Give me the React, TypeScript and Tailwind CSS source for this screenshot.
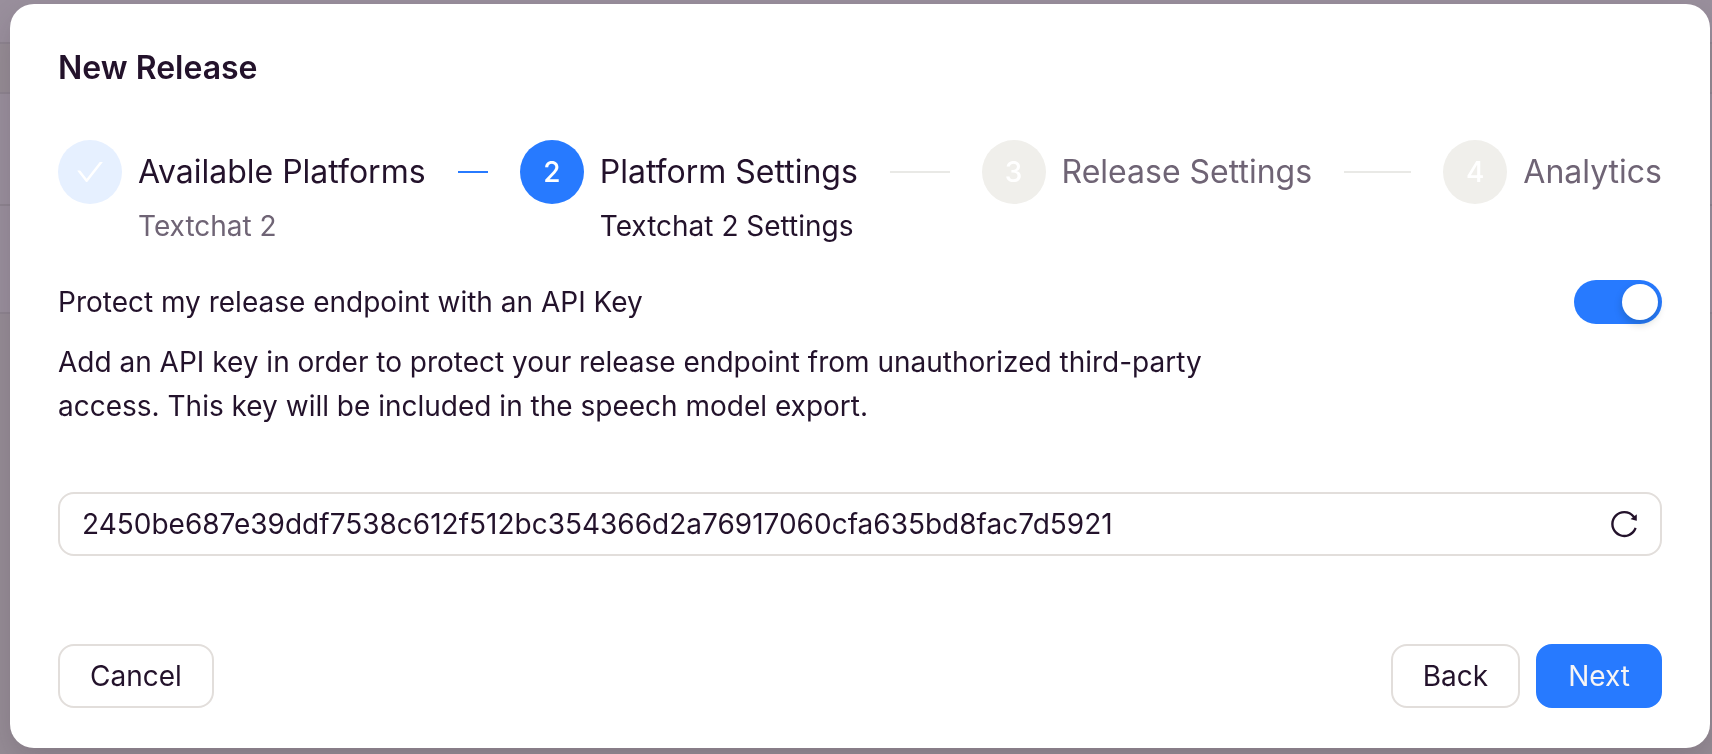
import { useState } from "react";
import { AiOutlineCheck, AiOutlineReload } from "react-icons/ai";
import clsx from "clsx";

type StepStatus = "done" | "active" | "waiting";

interface Step {
  title: string;
  description?: string;
  status: StepStatus;
}

const steps: Step[] = [
  { title: "Available Platforms", description: "Textchat 2", status: "done" },
  { title: "Platform Settings", description: "Textchat 2 Settings", status: "active" },
  { title: "Release Settings", status: "waiting" },
  { title: "Analytics", status: "waiting" },
];

const circleStyles: Record<StepStatus, string> = {
  done: "bg-[#e6f0ff]",
  active: "bg-[#277aff]",
  waiting: "bg-[#f0efeb]",
};

function StepItem({ step, index, last }: { step: Step; index: number; last: boolean }) {
  return (
    <li
      className={clsx("flex gap-4", last ? "flex-none" : "min-w-0 flex-1")}
      aria-current={step.status === "active" ? "step" : undefined}
    >
      <span
        className={clsx(
          "flex size-16 shrink-0 items-center justify-center rounded-full text-[28px] font-medium text-white",
          circleStyles[step.status]
        )}
      >
        {step.status === "done" ? <AiOutlineCheck className="size-8" /> : index + 1}
      </span>
      <div className="min-w-0 flex-1">
        <div className="flex items-center gap-8">
          <span
            className={clsx(
              "text-[32px] leading-16 whitespace-nowrap",
              step.status === "waiting" && "text-[#6f6475]"
            )}
          >
            {step.title}
          </span>
          {!last && (
            <span
              className={clsx("h-0.5 flex-1", step.status === "done" ? "bg-[#277aff]" : "bg-[#e9e9e6]")}
            />
          )}
        </div>
        {step.description && (
          <p className={clsx("whitespace-nowrap", step.status === "done" && "text-[#6f6475]")}>
            {step.description}
          </p>
        )}
      </div>
    </li>
  );
}

/* Dimmed page behind the dialog */
function Backdrop() {
  return (
    <div className="fixed inset-0 -z-10 flex flex-col bg-[#9a909d]" aria-hidden="true">
      <div className="h-11 border-b-2 border-[#8e8590]" />
      <div className="h-[50px] border-b-2 border-[#8e8590] bg-[#968d95]" />
      <div className="h-28 border-b-2 border-[#8e8590]" />
      <div className="h-27 border-b-2 border-[#8e8590]" />
      <div className="flex-1 bg-[#968d96]" />
    </div>
  );
}

const buttonBase = "h-16 cursor-pointer rounded-2xl border-2 px-[30px]";

export default function App() {
  const [isProtected, setIsProtected] = useState(true);
  const [apiKey, setApiKey] = useState(
    "2450be687e39ddf7538c612f512bc354366d2a76917060cfa635bd8fac7d5921"
  );

  return (
    <div className="isolate pt-1 pr-0.5 pb-1.5 pl-2.5 font-['Inter',sans-serif] text-[28px] leading-11 text-[#23122b]">
      <Backdrop />

      <div
        role="dialog"
        aria-labelledby="dialog-title"
        className="rounded-3xl bg-white px-12 py-10 shadow-[0_12px_32px_rgba(60,40,60,0.2)]"
      >
        <h1 id="dialog-title" className="text-[32px] leading-12 font-semibold">
          New Release
        </h1>

        <ol className="mt-12 flex gap-8">
          {steps.map((step, index) => (
            <StepItem key={step.title} step={step} index={index} last={index === steps.length - 1} />
          ))}
        </ol>

        {/* API key protection */}
        <div className="mt-8 flex items-center justify-between">
          <label htmlFor="protect">Protect my release endpoint with an API Key</label>
          <input
            id="protect"
            type="checkbox"
            role="switch"
            checked={isProtected}
            onChange={(e) => setIsProtected(e.target.checked)}
            className="flex h-11 w-22 cursor-pointer appearance-none items-center rounded-full bg-[#bdb8bf] px-1 before:size-9 before:rounded-full before:bg-white before:shadow-[0_4px_8px_rgba(0,35,11,0.2)] checked:justify-end checked:bg-[#277aff]"
          />
        </div>
        <p className="mt-4 w-3/4">
          Add an API key in order to protect your release endpoint from unauthorized third-party
          access. This key will be included in the speech model export.
        </p>

        <div className="mt-16 flex h-16 items-center rounded-2xl border-2 border-[#e2dedb] pr-5 pl-[22px]">
          <input
            type="text"
            aria-label="API Key"
            value={apiKey}
            onChange={(e) => setApiKey(e.target.value)}
            className="min-w-0 flex-1 outline-none"
          />
          <button type="button" aria-label="Regenerate key" className="cursor-pointer">
            <AiOutlineReload className="size-8" />
          </button>
        </div>

        <div className="mt-22 flex gap-4">
          <button type="button" className={clsx(buttonBase, "mr-auto border-[#e2dedb]")}>
            Cancel
          </button>
          <button type="button" className={clsx(buttonBase, "border-[#e2dedb]")}>
            Back
          </button>
          <button type="button" className={clsx(buttonBase, "border-[#277aff] bg-[#277aff] text-[#f7f5f5]")}>
            Next
          </button>
        </div>
      </div>
    </div>
  );
}
